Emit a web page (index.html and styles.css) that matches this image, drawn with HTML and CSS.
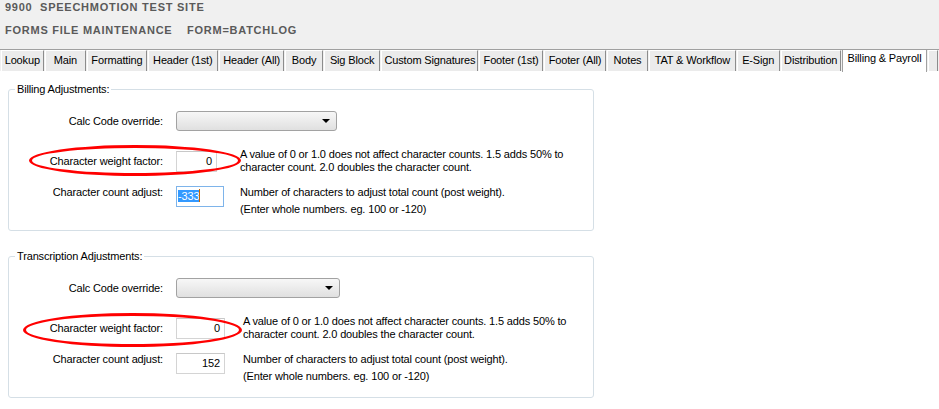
FILE: index.html
```html
<!DOCTYPE html>
<html lang="en">
<head>
    <meta charset="UTF-8">
    <title>Forms File Maintenance</title>
    <link rel="stylesheet" href="styles.css">
</head>
<body>
    <div class="header">
        <div class="site">9900&nbsp; SPEECHMOTION TEST SITE</div>
        <div class="form-title"><span class="form-section">FORMS FILE MAINTENANCE</span><span>FORM=BATCHLOG</span></div>
    </div>

    <div class="tabs">
        <a class="tab">Lookup</a>
        <a class="tab">Main</a>
        <a class="tab">Formatting</a>
        <a class="tab">Header (1st)</a>
        <a class="tab">Header (All)</a>
        <a class="tab">Body</a>
        <a class="tab">Sig Block</a>
        <a class="tab">Custom Signatures</a>
        <a class="tab">Footer (1st)</a>
        <a class="tab">Footer (All)</a>
        <a class="tab">Notes</a>
        <a class="tab">TAT &amp; Workflow</a>
        <a class="tab">E-Sign</a>
        <a class="tab">Distribution</a>
        <a class="tab active">Billing &amp; Payroll</a>
        <a class="tab tab-more"></a>
    </div>

    <div class="panel">
        <!-- Billing -->
        <fieldset class="group">
            <legend>Billing Adjustments:</legend>
            <div class="row row-select">
                <label class="label">Calc Code override:</label>
                <div class="select"><span class="arrow"></span></div>
            </div>
            <div class="row row-weight">
                <label class="label">Character weight factor:</label>
                <div class="control"><div class="input input-weight">0</div></div>
                <p class="hint">A value of 0 or 1.0 does not affect character counts. 1.5 adds 50% to<br>character count. 2.0 doubles the character count.</p>
                <span class="mark"></span>
            </div>
            <div class="row row-count">
                <label class="label">Character count adjust:</label>
                <div class="control"><div class="input input-count focused"><span class="selected">-333</span><span class="caret"></span></div></div>
                <div class="hint-lines">
                    <p>Number of characters to adjust total count (post weight).</p>
                    <p>(Enter whole numbers. eg. 100 or -120)</p>
                </div>
            </div>
        </fieldset>

        <!-- Transcription -->
        <fieldset class="group group-wide">
            <legend>Transcription Adjustments:</legend>
            <div class="row row-select">
                <label class="label">Calc Code override:</label>
                <div class="select"><span class="arrow"></span></div>
            </div>
            <div class="row row-weight">
                <label class="label">Character weight factor:</label>
                <div class="control"><div class="input input-weight">0</div></div>
                <p class="hint">A value of 0 or 1.0 does not affect character counts. 1.5 adds 50% to<br>character count. 2.0 doubles the character count.</p>
                <span class="mark"></span>
            </div>
            <div class="row row-count">
                <label class="label">Character count adjust:</label>
                <div class="control"><div class="input input-count">152</div></div>
                <div class="hint-lines">
                    <p>Number of characters to adjust total count (post weight).</p>
                    <p>(Enter whole numbers. eg. 100 or -120)</p>
                </div>
            </div>
        </fieldset>
    </div>
</body>
</html>
```

FILE: styles.css
```css
/* General body styling */
body {
    margin: 0;
    font-family: "Liberation Sans", Arial, sans-serif;
    font-size: 11px;
    letter-spacing: -0.15px;
    color: #000;
    background-color: #fff;
}

/* Site header */
.header {
    height: 49px;
    padding-left: 5px;
    background-color: #f0f0f0;
    color: #5a5a5a;
    font-weight: bold;
    letter-spacing: 0.75px;
    line-height: 14px;
}

.form-title {
    margin-top: 9px;
}

.form-section {
    display: inline-block;
    width: 182px;
}

/* Tab strip */
.tabs {
    display: flex;
    height: 21px;
    padding-left: 1px;
    border-top: 1px solid #a0a0a0;
    background-color: #f0f0f0;
}

.tab {
    box-sizing: border-box;
    height: 21px;
    margin-right: 1px;
    background-color: #ebebeb;
    border-top: 1px solid #fff;
    border-left: 1px solid #fff;
    border-right: 1px solid #8c8c8c;
    text-align: center;
    line-height: 19px;
    white-space: nowrap;
    color: #000;
}

.tab:nth-child(1) { width: 43px; }
.tab:nth-child(2) { width: 42px; }
.tab:nth-child(3) { width: 60px; }
.tab:nth-child(4) { width: 71px; }
.tab:nth-child(5) { width: 66px; }
.tab:nth-child(6) { width: 38px; }
.tab:nth-child(7) { width: 57px; }
.tab:nth-child(8) { width: 98px; }
.tab:nth-child(9) { width: 64px; }
.tab:nth-child(10) { width: 63px; }
.tab:nth-child(11) { width: 41px; }
.tab:nth-child(12) { width: 88px; }
.tab:nth-child(13) { width: 43px; }
.tab:nth-child(14) { width: 61px; }

.tab.active {
    width: 86px;
    height: 22px;
    background-color: #fff;
    border-top: none;
    border-left: 1px solid #a0a0a0;
    border-right: 1px solid #a0a0a0;
    line-height: 17px;
}

.tab.tab-more {
    width: 10px;
}

/* Main panel */
.panel {
    padding: 11px 0 0 8px;
}

.group {
    box-sizing: border-box;
    width: 586px;
    min-width: 0;
    margin: 0;
    padding: 0 0 12px 0;
    border: 1px solid #d5dfe6;
    border-radius: 3px;
}

.group + .group {
    margin-top: 18px;
}

.group legend {
    margin-left: 6px;
    padding: 0 2px;
    line-height: 14px;
}

.row {
    display: flex;
}

.label {
    flex-shrink: 0;
    width: 154px;
    text-align: right;
}

.control {
    flex-shrink: 0;
    width: 64px;
    margin-left: 13px;
}

.group-wide .control {
    width: 67px;
}

/* Drop-down */
.row-select {
    height: 20px;
    margin-top: 15px;
    align-items: center;
}

.select {
    box-sizing: border-box;
    display: flex;
    justify-content: flex-end;
    align-items: center;
    width: 161px;
    height: 20px;
    margin-left: 13px;
    padding-right: 6px;
    border: 1px solid #a2a2a2;
    border-radius: 3px;
    background: linear-gradient(#f7f7f7, #e0e0e0);
}

.group-wide .select {
    width: 164px;
}

.arrow {
    width: 0;
    height: 0;
    border-left: 4px solid transparent;
    border-right: 4px solid transparent;
    border-top: 4px solid #000;
}

/* Text boxes */
.input {
    box-sizing: border-box;
    height: 21px;
    padding-right: 4px;
    border: 1px solid #d4d4d4;
    border-top-color: #c8c8c8;
    background-color: #fff;
    text-align: right;
    line-height: 19px;
}

.input-weight {
    width: 41px;
}

.group-wide .input {
    width: 49px;
}

.input-count {
    width: 48px;
    margin-top: 2px;
}

.input.focused {
    padding: 0 0 0 1px;
    border-color: #7eb4ea;
    text-align: left;
}

.selected {
    background-color: #3399ff;
    color: #fff;
}

.caret {
    display: inline-block;
    width: 1px;
    height: 13px;
    vertical-align: -2px;
    background-color: #c86400;
}

/* Help text */
.row-weight {
    position: relative;
    margin-top: 17px;
    align-items: center;
}

.hint {
    margin: 0;
    line-height: 13px;
}

.row-count {
    margin-top: 10px;
    align-items: flex-start;
    line-height: 17px;
}

.hint-lines p {
    margin: 0;
}

/* Red marker circles */
.mark {
    position: absolute;
    left: 20px;
    top: -3px;
    box-sizing: border-box;
    width: 212px;
    height: 31px;
    border: 3px solid #f00;
    border-radius: 50%;
    pointer-events: none;
}

.group-wide .mark {
    left: 14px;
    top: -2px;
    width: 219px;
    height: 34px;
}
```
